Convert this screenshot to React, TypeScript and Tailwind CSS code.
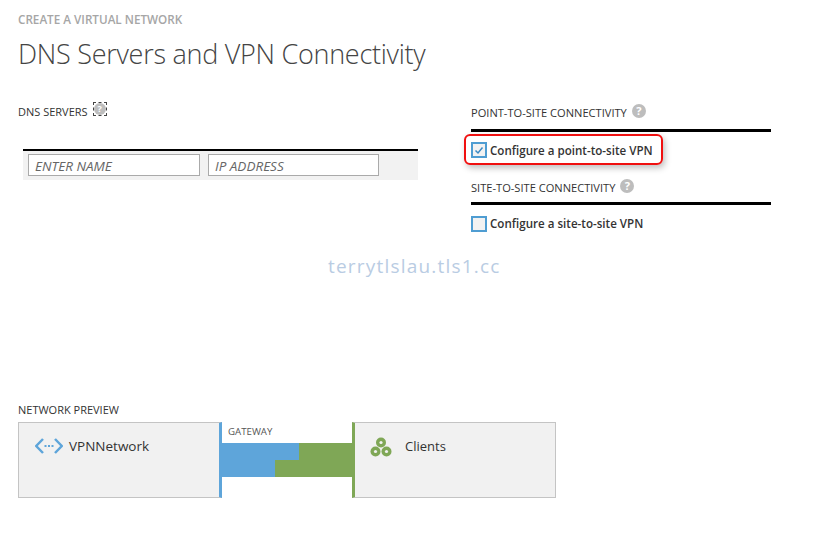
import React from 'react';

const HelpIcon: React.FC<{ focused?: boolean }> = ({ focused }) => (
  <span className={`inline-flex items-center justify-center w-[14px] h-[14px] ${focused ? 'border border-dashed border-[#444]' : ''}`}>
    <span className={`flex items-center justify-center rounded-full bg-[#bdbdbd] text-white font-bold leading-none ${focused ? 'w-[12px] h-[12px] text-[9px]' : 'w-[14px] h-[14px] text-[11px]'}`}>?</span>
  </span>
);

const Check: React.FC<{ checked?: boolean }> = ({ checked }) => (
  <span className="w-[16px] h-[16px] border-2 border-[#4f9dd2] bg-[#f2f2f2] flex items-center justify-center shrink-0">
    {checked && (
      <svg width="10" height="9" viewBox="0 0 10 9" fill="none">
        <path d="M1.5 4.5 L4 7 L8.5 1.5" stroke="#3b8ac4" strokeWidth="1.5" />
      </svg>
    )}
  </span>
);

const SectionHead: React.FC<{ label: string; pad: string }> = ({ label, pad }) => (
  <div className={`flex items-start gap-[5px] h-[32px] text-[11.1px] leading-[16px] text-[#333] border-b-[3px] border-black w-[300px] ${pad}`}>
    <span>{label}</span>
    <span className="-mt-[2px]">
      <HelpIcon />
    </span>
  </div>
);

const NetworkIcon = () => (
  <svg width="28" height="16" viewBox="0 0 28 16" fill="none">
    <path d="M8 1 L1.2 8 L8 15" stroke="#5ea5da" strokeWidth="2.5" />
    <path d="M20 1 L26.8 8 L20 15" stroke="#5ea5da" strokeWidth="2.5" />
    <rect x="9.5" y="7" width="2" height="2" fill="#5ea5da" />
    <rect x="13" y="7" width="2" height="2" fill="#5ea5da" />
    <rect x="16.5" y="7" width="2" height="2" fill="#5ea5da" />
  </svg>
);

const ClientsIcon = () => (
  <svg width="22" height="20" viewBox="0 0 22 20">
    <circle cx="11" cy="5.5" r="5" fill="#7fa756" />
    <circle cx="5.5" cy="14.5" r="5" fill="#7fa756" />
    <circle cx="16.5" cy="14.5" r="5" fill="#7fa756" />
    <circle cx="11" cy="5.5" r="1.6" fill="#f1f1f1" />
    <circle cx="5.5" cy="14.5" r="1.6" fill="#f1f1f1" />
    <circle cx="16.5" cy="14.5" r="1.6" fill="#f1f1f1" />
  </svg>
);

export default function App() {
  return (
    <div className="relative w-[834px] h-[535px] bg-white overflow-hidden pl-[18px] font-['Open_Sans',sans-serif] text-[#333]">
      <div className="pt-[11px] text-[11.7px] leading-[16px] font-semibold text-[#a6a6a6]">CREATE A VIRTUAL NETWORK</div>
      <h1 className="mt-[9px] text-[27px] leading-[36px] font-light text-[#444] tracking-[-0.27px]">DNS Servers and VPN Connectivity</h1>

      <div className="flex mt-[28px]">
        {/* DNS servers */}
        <div className="w-[453px]">
          <div className="flex items-start gap-[5px] text-[11px] leading-[16px] mt-[4px]">
            <span>DNS SERVERS</span>
            <span className="-mt-[4px]">
              <HelpIcon focused />
            </span>
          </div>
          <div className="ml-[5px] mt-[29px] w-[395px] h-[31px] border-t-2 border-black bg-[#f2f2f2] flex items-start gap-[8px] pl-[5px] pt-[3px]">
            <div className="w-[172px] h-[22px] border border-[#aaa] bg-white px-[6px] text-[13.5px] leading-[22px] italic text-[#666]">ENTER NAME</div>
            <div className="w-[171px] h-[22px] border border-[#aaa] bg-white px-[6px] text-[13.5px] leading-[22px] italic text-[#666]">IP ADDRESS</div>
          </div>
        </div>

        {/* VPN options */}
        <div>
          <SectionHead label="POINT-TO-SITE CONNECTIVITY" pad="pt-[5px]" />
          <div className="relative flex items-center gap-[3px] mt-[10px] h-[16px] text-[11.6px] font-semibold text-[#333]">
            <Check checked />
            <span className="pt-[1px]">Configure a point-to-site VPN</span>
            <div className="absolute left-[-7px] top-[-8px] w-[199px] h-[31px] rounded-[6px] border-2 border-[#f01010] shadow-[2px_3px_6px_rgba(0,0,0,0.25)]" />
          </div>
          <div className="mt-[15px]">
            <SectionHead label="SITE-TO-SITE CONNECTIVITY" pad="pt-[7px]" />
          </div>
          <div className="flex items-center gap-[3px] mt-[11px] h-[16px] text-[11.6px] font-semibold text-[#333]">
            <Check />
            <span>Configure a site-to-site VPN</span>
          </div>
        </div>
      </div>

      {/* Network preview */}
      <div className="mt-[171px]">
        <div className="text-[11px] leading-[14px] text-[#333]">NETWORK PREVIEW</div>
        <div className="flex mt-[5px] h-[76px]">
          <div className="w-[204px] border border-[#c4c4c4] border-r-[3px] border-r-[#5ea5da] bg-[#f1f1f1] flex items-start gap-[6px] pl-[16px] pt-[15px]">
            <NetworkIcon />
            <span className="text-[13.5px] leading-[18px] -mt-[1px]">VPNNetwork</span>
          </div>
          <div className="w-[130px]">
            <div className="h-[21px] pl-[6px] pt-[3px] text-[9.7px] leading-[14px] text-[#555]">GATEWAY</div>
            <div className="flex h-[17px]">
              <div className="w-[77px] bg-[#5ea5da]" />
              <div className="flex-1 bg-[#7fa756]" />
            </div>
            <div className="flex h-[17px]">
              <div className="w-[53px] bg-[#5ea5da]" />
              <div className="flex-1 bg-[#7fa756]" />
            </div>
          </div>
          <div className="w-[204px] border border-[#c4c4c4] border-l-[3px] border-l-[#7fa756] bg-[#f1f1f1] flex items-start gap-[13px] pl-[15px] pt-[14px]">
            <ClientsIcon />
            <span className="text-[13px] leading-[18px] -mt-[0px]">Clients</span>
          </div>
        </div>
      </div>

      {/* Watermark */}
      <div className="absolute left-[328px] top-[253px] text-[19px] leading-[26px] tracking-[1.2px] text-[#b9cce3]">terrytlslau.tls1.cc</div>
    </div>
  );
}
